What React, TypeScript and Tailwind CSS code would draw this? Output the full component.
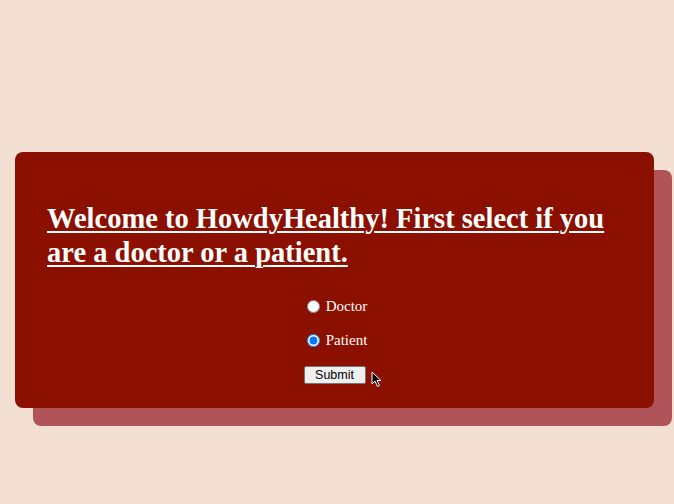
export default function App() {
  return (
    <div className="min-h-[504px] w-full bg-[#f3e0d3] pt-[152px] px-[15px] relative" style={{ fontFamily: '"Liberation Serif", serif' }}>
      <div className="relative w-[639px]">
        <div className="absolute left-[18px] top-[18px] w-full h-full rounded-[8px] bg-[#b0545a]" />
        <div className="relative rounded-[8px] bg-[#8b1000] px-8 pt-8 pb-[22px] text-white">
          <h1 className="mt-[18px] mb-[19px] text-[28.5px] leading-[34px] font-bold underline decoration-2 underline-offset-[3px]">
            Welcome to HowdyHealthy! First select if you are a doctor or a patient.
          </h1>
          <form className="flex flex-col items-center mt-[27px]">
            <label className="flex items-center h-[18px] text-[15px]">
              <input type="radio" name="role" value="doctor" className="w-[13px] h-[13px] ml-[5px] mr-[6px]" />
              Doctor
            </label>
            <label className="flex items-center h-[18px] text-[15px] mt-4">
              <input type="radio" name="role" value="patient" defaultChecked className="w-[13px] h-[13px] ml-[5px] mr-[6px]" />
              Patient
            </label>
            <div className="relative mt-[13px]">
              <button
                type="button"
                className="w-[62px] h-[18px] bg-[#efefef] border border-[#767676] rounded-[2px] text-black text-[12.5px] leading-none"
                style={{ fontFamily: '"Liberation Sans", Arial, sans-serif' }}
              >
                Submit
              </button>
              <svg className="absolute left-[67px] top-[9px]" width="12" height="17" viewBox="0 0 12 17">
                <path d="M1 1 L1 13 L4 10 L6.5 15.5 L8.5 14.5 L6 9.5 L10 9.5 Z" fill="#000" stroke="#fff" strokeWidth="1" />
              </svg>
            </div>
          </form>
        </div>
      </div>
    </div>
  );
}
